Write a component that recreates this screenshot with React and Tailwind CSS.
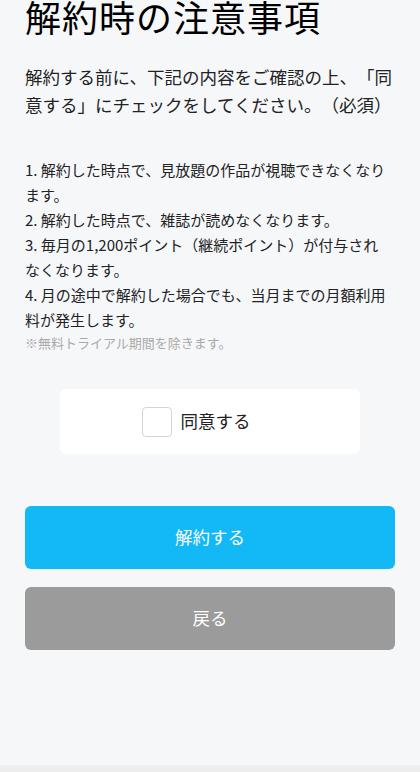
import React, { useState } from "react";

const notes = [
	"1. 解約した時点で、見放題の作品が視聴できなくなります。",
	"2. 解約した時点で、雑誌が読めなくなります。",
	"3. 毎月の1,200ポイント（継続ポイント）が付与されなくなります。",
	"4. 月の途中で解約した場合でも、当月までの月額利用料が発生します。",
];

const App = () => {
	const [agreed, setAgreed] = useState(false);

	return (
		<div
			className="min-h-screen bg-[#f6f7f9] flex flex-col text-[#1a1a1a] [text-spacing-trim:space-all]"
			style={{ fontFamily: '"Noto Sans CJK JP", "Noto Sans", sans-serif' }}>
			<div className="px-[25px] pb-[115px]">
				{/* Title */}
				<h1 className="text-[36px] leading-[32px] font-normal text-black tracking-[1px]">
					解約時の注意事項
				</h1>

				{/* Intro */}
				<p className="mt-[31px] text-[17.5px] leading-[28px] text-[#222]">
					解約する前に、下記の内容をご確認の上、「同意する」にチェックをしてください。（必須）
				</p>

				{/* Notes */}
				<div className="mt-[38px] pr-[5px] text-[15px] leading-[25px] text-[#222]">
					{notes.map((n) => (
						<p key={n}>{n}</p>
					))}
					<p className="text-[13px] leading-[22px] text-[#aaa]">※無料トライアル期間を除きます。</p>
				</div>

				{/* Agree box */}
				<div className="mt-[35px] mx-[35px] h-[65px] bg-white rounded-[6px] flex items-center justify-center">
					<label className="flex items-center gap-[9px] cursor-pointer mr-[28px]">
						<span
							onClick={() => setAgreed(!agreed)}
							className="w-[30px] h-[30px] border border-[#d4d4d4] rounded-[4px] bg-white flex items-center justify-center">
							{agreed && <span className="text-[#12b9f5] text-[18px]">✓</span>}
						</span>
						<span className="text-[17.5px] text-[#222]">同意する</span>
					</label>
				</div>

				{/* Buttons */}
				<button className="mt-[52px] w-full h-[63px] rounded-[6px] bg-[#12b9f5] text-white text-[17.5px]">
					解約する
				</button>
				<button className="mt-[18px] w-full h-[63px] rounded-[6px] bg-[#9b9b9b] text-white text-[17.5px]">
					戻る
				</button>
			</div>
			<div className="border-t border-[#f0f0f0] bg-[#ededed] h-[40px]" />
		</div>
	);
};

export default App;
